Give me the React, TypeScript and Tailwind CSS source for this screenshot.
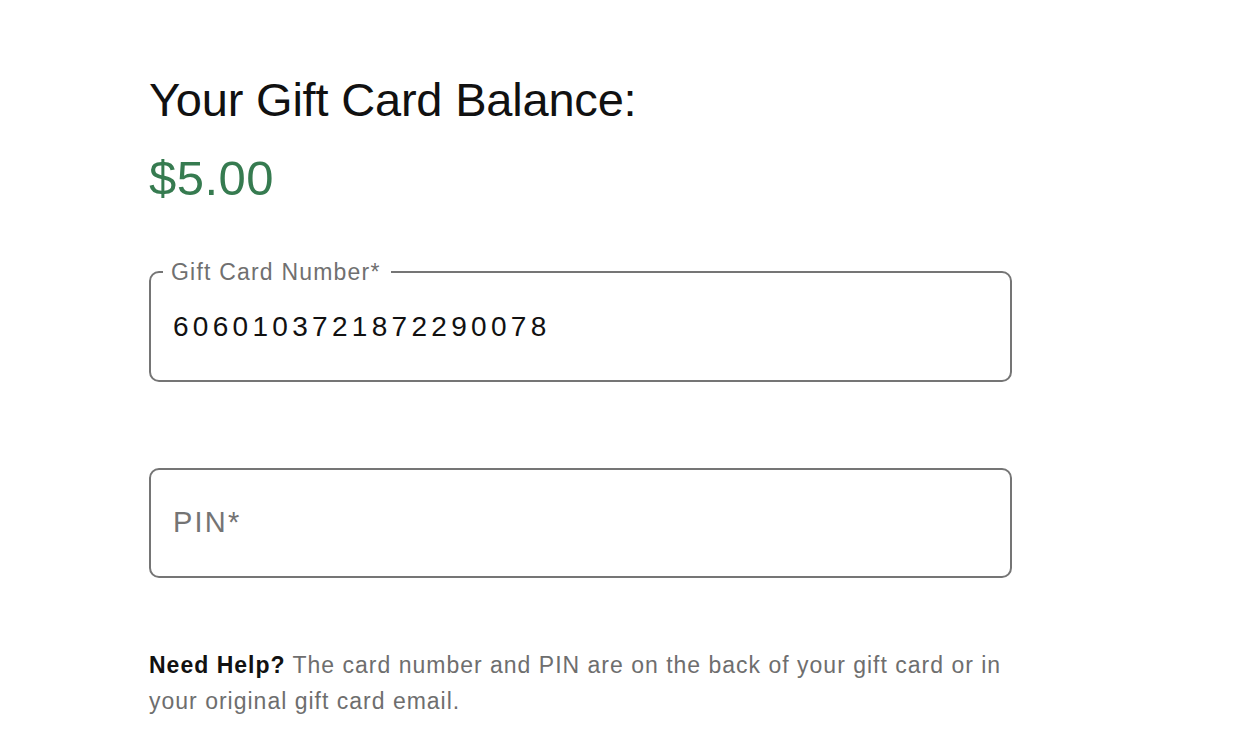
export default function App() {
  return (
    <div
      className="min-h-screen bg-white pl-[149px] pt-[72px] text-[#111]"
      style={{ fontFamily: '"Liberation Sans", Arial, sans-serif' }}
    >
      <div className="w-[863px]">
        <h1 className="text-[47px] leading-[55px] tracking-[-0.2px] text-[#111]">Your Gift Card Balance:</h1>
        <p className="mt-[23px] text-[49px] leading-[56px] tracking-[0.5px] text-[#367b50]">$5.00</p>

        <fieldset className="mt-[54px] h-[122px] rounded-[10px] border-2 border-[#757575] px-[22px]">
          <legend className="-ml-[10px] pl-[8px] pr-[10px] text-[23px] leading-[24px] tracking-[1.2px] text-[#707070]">
            Gift Card Number*
          </legend>
          <div className="pt-[27px] text-[28px] leading-[32px] tracking-[4.3px] text-[#111]">
            6060103721872290078
          </div>
        </fieldset>

        <div className="mt-[86px] flex h-[110px] items-center rounded-[10px] border-2 border-[#757575] px-[22px]">
          <span className="text-[29px] tracking-[2.2px] text-[#747474]">PIN*</span>
        </div>

        <p className="mt-[69px] text-[23px] leading-[36px] tracking-[1px] text-[#6e6e6e]">
          <span className="font-bold text-[#111]">Need Help?</span> The card number and PIN are on the back of your
          gift card or in your original gift card email.
        </p>
      </div>
    </div>
  );
}
